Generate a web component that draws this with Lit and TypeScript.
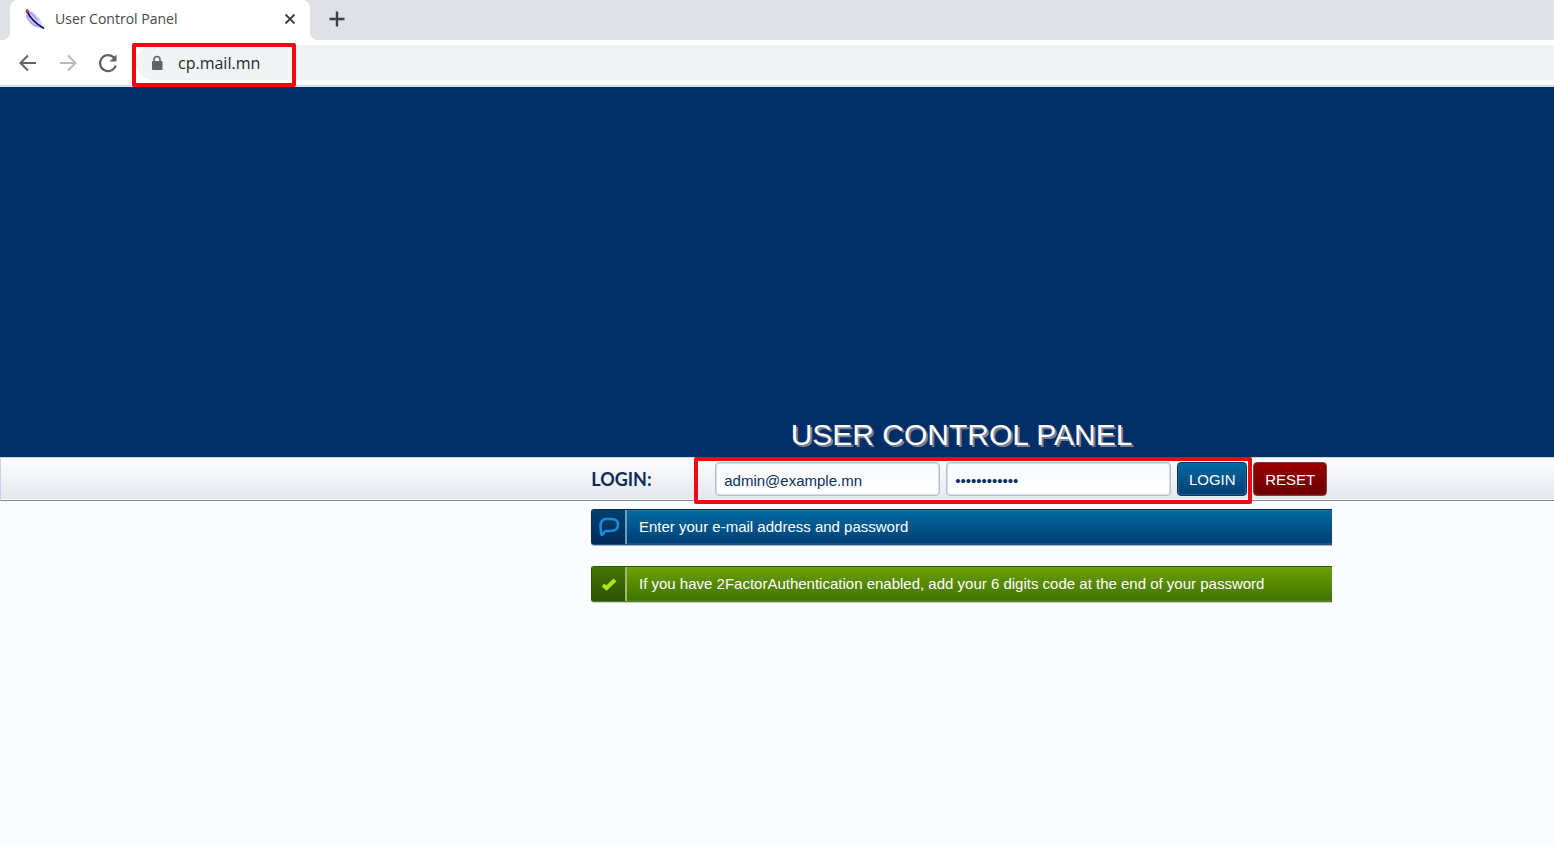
import { LitElement, html, css, svg } from "lit";
import { customElement, property } from "lit/decorators.js";

@customElement("browser-bar")
class BrowserBar extends LitElement {
  static styles = css`
    :host { display: block; font-family: "Open Sans", "Noto Sans", sans-serif; }
    button { border: 0; padding: 0; background: none; display: grid; place-items: center; }
    svg { display: block; }
    .tabs { display: flex; align-items: flex-end; height: 40px; background: #dee1e6; }
    .tab {
      position: relative; box-sizing: border-box; display: flex; align-items: center;
      width: 300px; height: 40px; margin-left: 10px; padding: 0 12px 2px 14px;
      background: #fff; border-radius: 8px 8px 0 0; color: #45494d;
    }
    .tab::before, .tab::after {
      content: ""; position: absolute; bottom: 0; width: 8px; height: 8px;
    }
    .tab::before { left: -8px; background: radial-gradient(circle at 0 0, transparent 8px, #fff 8px); }
    .tab::after { right: -8px; background: radial-gradient(circle at 100% 0, transparent 8px, #fff 8px); }
    .title { flex: 1; margin-left: 9px; font-size: 14px; line-height: 20px; white-space: nowrap; }
    .close { width: 16px; height: 16px; }
    .new { width: 24px; height: 24px; margin: 0 0 9px 15px; }
    .tools {
      display: flex; align-items: center; height: 45px; padding-left: 16px;
      background: #fff; border-bottom: 2px solid #d3dfed;
    }
    .nav { width: 24px; height: 24px; margin-right: 16px; }
    .address {
      position: relative; flex: 1; display: flex; align-items: center; height: 35px;
      padding-left: 14px; background: #f1f3f4; border-radius: 18px 0 0 18px;
    }
    .address input {
      flex: 1; min-width: 0; margin: 0 0 0 14px; padding: 0; border: 0; outline: 0; background: none;
      font: 16px/24px "Open Sans", "Noto Sans", sans-serif; color: #26292c;
    }
    .mark {
      position: absolute; box-sizing: border-box; left: -4px; top: -2px; width: 164px; height: 44px;
      border: 4px solid #f00a0f; border-radius: 2px; pointer-events: none;
    }
  `;

  render() {
    return html`
      <div class="tabs">
        <div class="tab">
          <svg width="22" height="22" viewBox="0 0 22 22" aria-hidden="true">
            <path d="M2 3C6 1 10 5 13 8C17 11 18 16 19.500 20.500C13 20.500 8 18 6 15C3 12 1.500 8 2 3Z" fill="#d2d2fb"/>
            <path d="M5 4C9 5 10 9 14 12M3 7C4 12 8 17 14 18.500" fill="none" stroke="#a9a9f4" stroke-width="2"/>
            <path d="M3 3C5 8 9 14 20 20.500" fill="none" stroke="#0d0d66" stroke-width="1.800"/>
            <path d="M1.500 2L4 1L5 4.500L2.500 5Z" fill="#d0252d"/>
          </svg>
          <span class="title">User Control Panel</span>
          <button class="close" aria-label="Close tab">
            <svg width="12" height="12" viewBox="0 0 12 12"><path d="M1.500 1.500L10.500 10.500M10.500 1.500L1.500 10.500" stroke="#3c4043" stroke-width="1.800"/></svg>
          </button>
        </div>
        <button class="new" aria-label="New tab">
          <svg width="16" height="16" viewBox="0 0 16 16"><path d="M8 .5V15.500M.5 8H15.500" stroke="#3c4043" stroke-width="2.400"/></svg>
        </button>
      </div>
      <div class="tools">
        <button class="nav" aria-label="Back">
          <svg width="24" height="24" viewBox="0 0 24 24" fill="none" stroke="#5f6368" stroke-width="2"><path d="M20 12H5M12 4.500L4.500 12L12 19.500"/></svg>
        </button>
        <button class="nav" aria-label="Forward">
          <svg width="24" height="24" viewBox="0 0 24 24" fill="none" stroke="#bababc" stroke-width="2"><path d="M4 12H19M12 4.500L19.500 12L12 19.500"/></svg>
        </button>
        <button class="nav" aria-label="Reload">
          <svg width="24" height="24" viewBox="0 0 24 24"><path d="M18.400 7.200A8 8 0 1 0 19.700 14.500" fill="none" stroke="#5f6368" stroke-width="2.200"/><path d="M20.500 3.500V10.500H13.500Z" fill="#5f6368"/></svg>
        </button>
        <div class="address">
          <svg width="14" height="16" viewBox="0 0 14 16" aria-hidden="true">
            <path d="M4 7V4.500A3 3 0 0 1 10 4.500V7" fill="none" stroke="#5f6368" stroke-width="1.600"/>
            <rect x="2" y="6" width="10.500" height="9" rx="1" fill="#5f6368"/>
          </svg>
          <input aria-label="Address" value="cp.mail.mn" />
          <div class="mark"></div>
        </div>
      </div>
    `;
  }
}

@customElement("notice-bar")
class NoticeBar extends LitElement {
  @property() kind = "info";

  static styles = css`
    :host { display: block; }
    .bar {
      box-sizing: border-box; display: flex; height: 36px; border: 1px solid; border-right: 0;
      border-radius: 3px 0 0 3px; color: #fff; font-size: 15px; line-height: 34px;
    }
    .icon { display: grid; place-items: center; width: 33px; border-right: 2px solid; }
    .text { padding-left: 12px; white-space: nowrap; }
    .info { background: linear-gradient(#006ba1, #003e74); border-color: #00305c #00305c #234f80; box-shadow: inset 0 1px #1b6f9f, inset 0 -1px #1d5488, 0 1px #a9b7ce; }
    .info .icon { background: linear-gradient(#00406f, #002c5c); border-color: #6f9bc0; }
    .tip { background: linear-gradient(#6da000, #3f7200); border-color: #2c5700 #2c5700 #507a32; box-shadow: inset 0 1px #75a018, inset 0 -1px #507f1d, 0 1px #cbd5c8; }
    .tip .icon { background: linear-gradient(#477600, #2c5200); border-color: #9aba6b; }
  `;

  render() {
    const icon = this.kind === "info"
      ? svg`<path d="M3 17C3.500 15 2.500 13.500 2.500 9Q2.500 2 8.500 2H13.500Q20 2 20 7.500Q20 14 13 14H9Q6 14 5 17Q4 19 3 17Z" fill="none" stroke="#168bd6" stroke-width="2.600" stroke-linejoin="round"/>`
      : svg`<path d="M5 11L8.500 14L17 6" fill="none" stroke="#a5ea14" stroke-width="4"/>`;
    return html`
      <div class="bar ${this.kind}">
        <span class="icon"><svg width="22" height="20" viewBox="0 0 22 20" aria-hidden="true">${icon}</svg></span>
        <span class="text"><slot></slot></span>
      </div>
    `;
  }
}

@customElement("app-root")
class AppRoot extends LitElement {
  static styles = css`
    :host {
      display: flex; flex-direction: column; min-height: 100vh; background: #fbfcff;
      font-family: "Liberation Sans", Arial, sans-serif;
    }
    .row { display: grid; grid-template-columns: minmax(0, 591fr) minmax(0, 741px) minmax(0, 222fr); }
    .row > * { grid-column: 2; }
    .hero { height: 370px; background: #002e67; align-items: end; }
    h1 {
      margin: 0 0 4px; text-align: center; font-weight: 400; font-size: 30px; line-height: 36px;
      color: #fff; text-shadow: 2px 2px #7c7f91; white-space: nowrap;
    }
    .strip {
      height: 42px; border: 1px solid #c9d2e2; border-bottom-color: #7c85a8; border-right: 0;
      background: linear-gradient(#fdfdff, #e5e7ee); box-shadow: inset 0 -1px #fff;
    }
    form { position: relative; display: flex; gap: 6px; padding-top: 4px; align-items: flex-start; }
    .name {
      width: 118px; font: 700 18px/34px Lato, "Open Sans", sans-serif; color: #0b2c57;
    }
    .field {
      box-sizing: border-box; width: 225px; height: 34px; margin: 0; padding: 2px 8px 0;
      border: 1px solid #b4bdd2; border-radius: 4px; outline: 0;
      background: linear-gradient(#f8faff, #fff); color: #062e5e;
      box-shadow: inset 0 0 0 1px #d5dcea;
      font: 15px/30px "Liberation Sans", Arial, sans-serif;
    }
    .button {
      box-sizing: border-box; height: 34px; padding: 1px 0 0; border: 1px solid; border-radius: 4px; color: #fff;
      font: 15px/30px "Liberation Sans", Arial, sans-serif;
    }
    .login { width: 70px; background: linear-gradient(#006ba1, #003e74); border-color: #00335f; box-shadow: inset 0 0 0 1px #23628f; }
    .reset { width: 74px; background: linear-gradient(#9c0000, #6b0000); border-color: #8a3a3a; box-shadow: inset 0 0 0 1px #7c0808; }
    .mark {
      position: absolute; box-sizing: border-box; left: 103px; top: -1px; width: 558px; height: 47px;
      border: 4px solid #f00a0f; border-radius: 2px; pointer-events: none;
    }
    .notices { display: grid; gap: 21px; padding-top: 8px; }
  `;

  render() {
    return html`
      <browser-bar></browser-bar>
      <header class="row hero"><h1>USER CONTROL PANEL</h1></header>
      <div class="row strip">
        <form @submit=${(e: Event) => e.preventDefault()}>
          <label class="name" for="email">LOGIN:</label>
          <input class="field" id="email" type="text" value="admin@example.mn" />
          <input class="field" type="password" aria-label="Password" value="examplepass1" />
          <button class="button login" type="submit">LOGIN</button>
          <button class="button reset" type="reset">RESET</button>
          <div class="mark"></div>
        </form>
      </div>
      <main class="row">
        <div class="notices">
          <notice-bar kind="info">Enter your e-mail address and password</notice-bar>
          <notice-bar kind="tip">If you have 2FactorAuthentication enabled, add your 6 digits code at the end of your password</notice-bar>
        </div>
      </main>
    `;
  }
}
